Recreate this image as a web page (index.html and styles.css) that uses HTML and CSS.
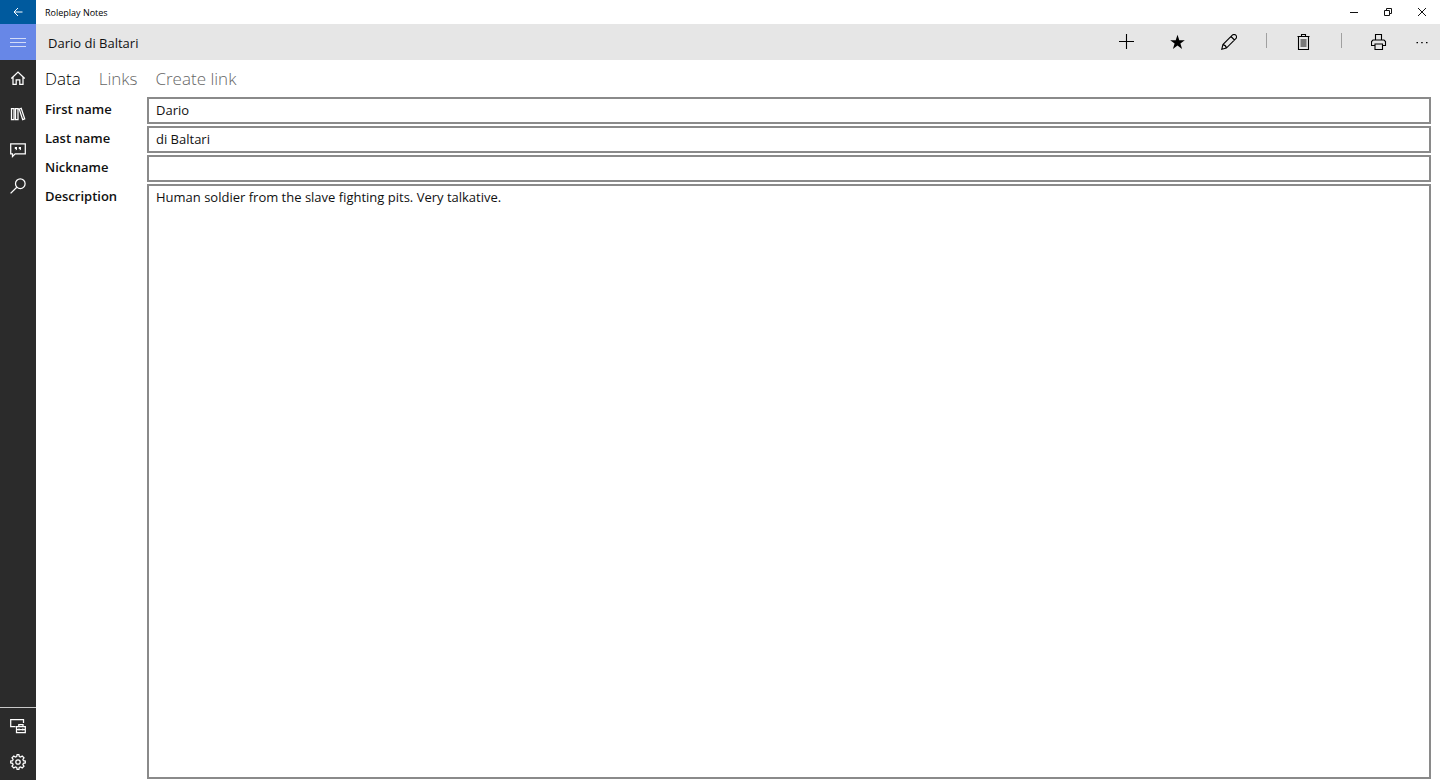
FILE: index.html
```html
<!DOCTYPE html>
<html lang="en">

<head>
  <meta charset="UTF-8">
  <meta name="viewport" content="width=device-width, initial-scale=1.0">
  <title>Roleplay Notes</title>
  <link rel="stylesheet" href="styles.css">
</head>

<body>
  <header class="titlebar">
    <button type="button" class="back" aria-label="Back">
      <svg width="10" height="10" viewBox="0 0 10 10"><path d="M9.5 5H1M5 1L1 5l4 4"/></svg>
    </button>
    <span class="app-title">Roleplay Notes</span>
    <div class="window-buttons">
      <button type="button" aria-label="Minimize">
        <svg width="8" height="8" viewBox="0 0 8 8"><path d="M0 4.5h8"/></svg>
      </button>
      <button type="button" aria-label="Restore">
        <svg width="8" height="8" viewBox="0 0 8 8"><path d="M.5 2.5h5v5h-5zM2.5 2.5v-2h5v5h-2"/></svg>
      </button>
      <button type="button" aria-label="Close">
        <svg width="8" height="8" viewBox="0 0 8 8"><path d="M0 0l8 8M8 0L0 8"/></svg>
      </button>
    </div>
  </header>

  <div class="app">
    <nav class="sidebar">
      <button type="button" class="menu" aria-label="Menu">
        <svg width="16" height="16" viewBox="0 0 16 16"><path d="M0 4.5h16M0 8.5h16M0 12.5h16"/></svg>
      </button>
      <button type="button" aria-label="Home">
        <svg width="16" height="16" viewBox="0 0 16 16"><path d="M1.3 8.5L8 2l6.7 6.5M3 7v7.3h3.2V9.8h3.6v4.5H13V7"/></svg>
      </button>
      <button type="button" aria-label="Library">
        <svg width="16" height="16" viewBox="0 0 16 16"><path d="M1.5 2.5H4v11H1.5zM5.5 2.5H8v11H5.5zM9.2 3l2-.7 3.500 10.500-2 .8z"/></svg>
      </button>
      <button type="button" aria-label="Conversations">
        <svg width="16" height="16" viewBox="0 0 16 16"><path d="M.7 1.800h14.600v10H5.200L2.500 14.500v-2.700H.7z"/><path class="solid" d="M4.800 5H7v2.500L5.800 8.500V7h-1zM8.800 5H11v2.500l-1.200 1V7h-1z"/></svg>
      </button>
      <button type="button" aria-label="Search">
        <svg width="16" height="16" viewBox="0 0 16 16"><circle cx="10.3" cy="5.7" r="4.8"/><path d="M6.8 9.2L.6 15.4"/></svg>
      </button>

      <div class="sidebar-bottom">
        <button type="button" aria-label="Devices">
          <svg width="16" height="16" viewBox="0 0 16 16"><path d="M5.5 8.500H.7v-7h12.800V5M6.500 14.500v-6h8.800v6zM8.800 8.300V6.500H13v1.800M6.500 11.500h8.800M9 10.500v2M12.800 10.500v2"/></svg>
        </button>
        <button type="button" aria-label="Settings">
          <svg width="16" height="16" viewBox="0 0 16 16"><path d="M6.7 2.600L7.100.7h1.800l.4 1.900 1.300.5 1.600-1.100 1.800 1.800-1.100 1.600.5 1.300 1.900.4v1.800l-1.900.4-.5 1.300 1.100 1.600-1.800 1.800-1.600-1.100-1.300.5-.4 1.900H7.100l-.4-1.900-1.300-.5L3.800 14 2 12.200l1.100-1.600-.5-1.300-1.900-.4V7.100l1.900-.4.5-1.300L2 3.800 3.800 2l1.600 1.100z"/><circle cx="8" cy="8" r="2.2"/></svg>
        </button>
      </div>
    </nav>

    <main class="page">
      <div class="command-bar">
        <h1>Dario di Baltari</h1>
        <button type="button" aria-label="Add">
          <svg width="16" height="16" viewBox="0 0 16 16"><path d="M7.5 0v15M0 7.500h15"/></svg>
        </button>
        <button type="button" aria-label="Favorite">
          <svg width="16" height="16" viewBox="0 0 16 16"><path class="solid" d="M7.500.8l1.800 5.400h5.500l-4.400 3.300 1.700 5.400-4.600-3.300-4.600 3.300 1.700-5.400L.2 6.200h5.500z"/></svg>
        </button>
        <button type="button" aria-label="Edit">
          <svg width="16" height="16" viewBox="0 0 16 16"><path d="M.8 15.200l1.100-4.600L11.300 1.200a2.200 2.200 0 0 1 3.500 3.500l-9.400 9.400zM1.900 10.600c1.800.2 3.200 1.600 3.500 3.500M10 2.500L13.500 6"/></svg>
        </button>
        <span class="separator"></span>
        <button type="button" aria-label="Delete">
          <svg width="16" height="16" viewBox="0 0 16 16"><path d="M1.5 2.500h12M5.500 2.500v-2h4v2M2.500 2.500v13h10v-13"/><path class="lines" d="M4.500 5h6v8h-6z"/></svg>
        </button>
        <span class="separator"></span>
        <button type="button" aria-label="Print">
          <svg width="16" height="16" viewBox="0 0 16 16"><path d="M4.500 6V.5h6V6M3.500 11.500h-3v-4L2 6h11l1.500 1.500v4h-3M4 10h7.500v5.500H4z"/></svg>
        </button>
        <button type="button" class="more" aria-label="More">
          <svg width="12" height="16" viewBox="0 0 12 16"><path class="solid" d="M.5 8H2v1.300H.5zM5.200 8h1.500v1.300H5.200zM10 8h1.500v1.300H10z"/></svg>
        </button>
      </div>

      <div class="tabs" role="tablist">
        <button type="button" role="tab" aria-selected="true">Data</button>
        <button type="button" role="tab" aria-selected="false">Links</button>
        <button type="button" role="tab" aria-selected="false">Create link</button>
      </div>

      <form class="data-form">
        <label for="first-name">First name</label>
        <input type="text" id="first-name" value="Dario">
        <label for="last-name">Last name</label>
        <input type="text" id="last-name" value="di Baltari">
        <label for="nickname">Nickname</label>
        <input type="text" id="nickname">
        <label for="description">Description</label>
        <textarea id="description" spellcheck="false">Human soldier from the slave fighting pits. Very talkative.</textarea>
      </form>
    </main>
  </div>
</body>

</html>
```
FILE: styles.css
```css
* {
  box-sizing: border-box;
}

body {
  display: flex;
  flex-direction: column;
  min-height: 100vh;
  margin: 0;
  font-family: "Segoe UI", "Open Sans", "Noto Sans", sans-serif;
  font-size: 13px;
  background-color: #fff;
  color: #111;
}

button {
  display: flex;
  align-items: center;
  justify-content: center;
  padding: 0;
  border: 0;
  background: none;
  color: inherit;
  font-family: inherit;
}

svg {
  fill: none;
  stroke: currentColor;
}

.solid {
  fill: currentColor;
  stroke: none;
}

/* title bar */
.titlebar {
  display: flex;
  align-items: center;
  height: 24px;
}

.back {
  width: 36px;
  height: 24px;
  background-color: #005a9e;
  color: #fff;
}

.app-title {
  flex: 1;
  padding-left: 9px;
  font-size: 9px;
  color: #000;
}

.window-buttons {
  display: flex;
  padding-right: 1px;
}

.window-buttons button {
  width: 34px;
  height: 24px;
}

.app {
  display: flex;
  flex: 1;
}

/* navigation */
.sidebar {
  display: flex;
  flex-direction: column;
  width: 36px;
  background-color: #2b2b2b;
  color: #fff;
}

.sidebar button {
  width: 36px;
  height: 36px;
}

.sidebar svg {
  stroke-width: 1.25;
}

.sidebar .menu {
  background-color: #6787e7;
  color: #d3dcf8;
}

.sidebar .menu svg {
  stroke-width: 1;
}

.sidebar-bottom {
  margin-top: auto;
  border-top: 1px solid #c8c8c8;
}

.page {
  display: flex;
  flex: 1;
  flex-direction: column;
}

/* command bar */
.command-bar {
  display: flex;
  height: 36px;
  background-color: #e6e6e6;
}

.command-bar h1 {
  flex: 1;
  margin: 0;
  padding-left: 12px;
  font-size: 13px;
  font-weight: normal;
  line-height: 38px;
}

.command-bar button {
  width: 51px;
  height: 36px;
  color: #000;
}

.command-bar svg {
  stroke-width: 1.1;
}

.command-bar .more {
  width: 36px;
}

.separator {
  width: 1px;
  height: 15px;
  margin: 9px 11px 0 12px;
  background-color: #a0a0a0;
}

.command-bar .lines {
  fill: #777;
  stroke: none;
}

/* tabs */
.tabs {
  display: flex;
  gap: 18px;
  height: 37px;
  padding-left: 9px;
}

.tabs button {
  height: 37px;
  font-size: 17px;
  font-weight: 300;
  color: #666;
}

.tabs button[aria-selected="true"] {
  color: #000;
}

/* form */
.data-form {
  display: grid;
  flex: 1;
  grid-template-columns: 100px 1fr;
  grid-template-rows: 27px 27px 27px 1fr;
  gap: 2px;
  padding: 0 9px 1px;
}

.data-form label {
  font-weight: 600;
  line-height: 24px;
}

.data-form input,
.data-form textarea {
  width: 100%;
  margin: 0;
  padding: 0 7px;
  border: 2px solid #8a8a8a;
  border-radius: 0;
  outline: 0;
  background-color: #fff;
  color: inherit;
  font-family: inherit;
  font-size: 13px;
  line-height: 23px;
}

.data-form textarea {
  height: 100%;
  resize: none;
}
```
